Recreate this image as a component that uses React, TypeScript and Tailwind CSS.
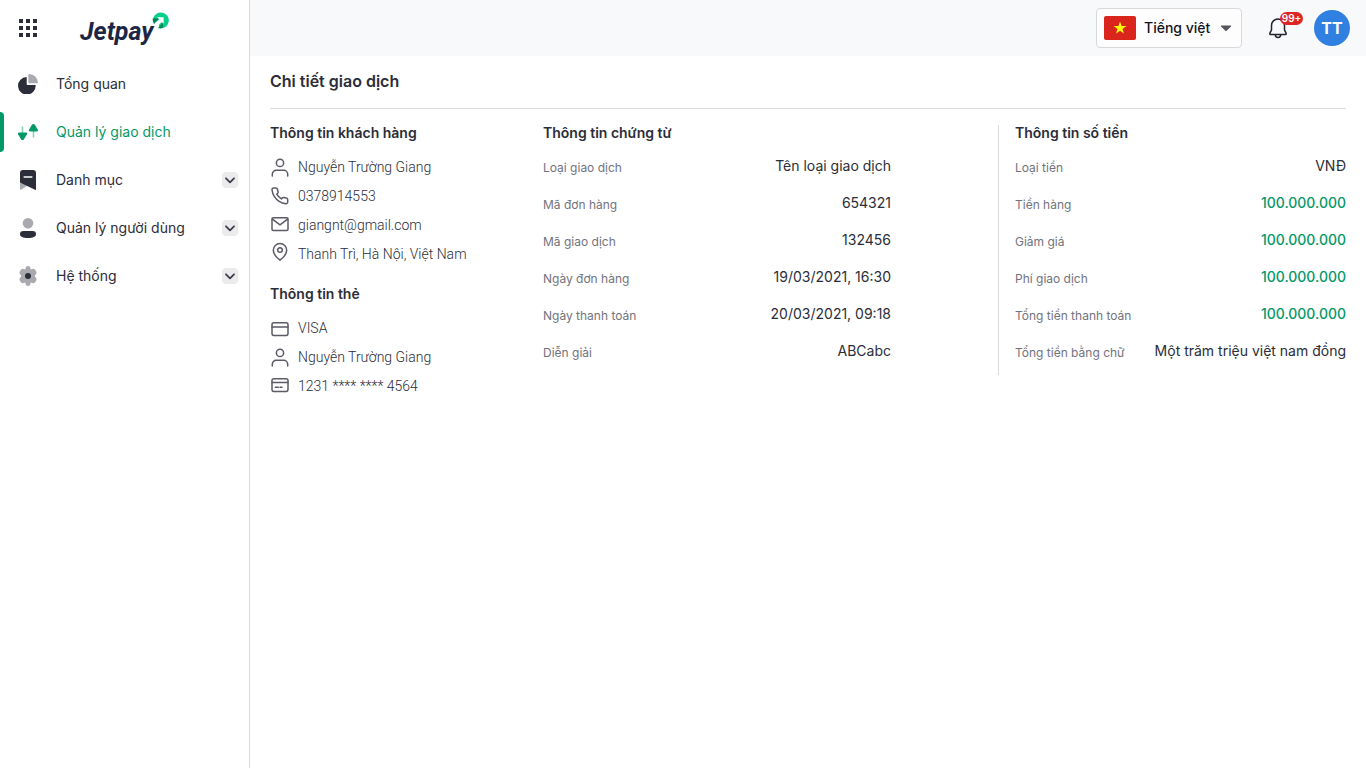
import type { ReactNode } from "react";

type Field = { label: string; value: string; money?: boolean };
type Contact = { icon: ReactNode; text: string };

const documentFields: Field[] = [
  { label: "Loại giao dịch", value: "Tên loại giao dịch" },
  { label: "Mã đơn hàng", value: "654321" },
  { label: "Mã giao dịch", value: "132456" },
  { label: "Ngày đơn hàng", value: "19/03/2021, 16:30" },
  { label: "Ngày thanh toán", value: "20/03/2021, 09:18" },
  { label: "Diễn giải", value: "ABCabc" },
];

const amountFields: Field[] = [
  { label: "Loại tiền", value: "VNĐ" },
  { label: "Tiền hàng", value: "100.000.000", money: true },
  { label: "Giảm giá", value: "100.000.000", money: true },
  { label: "Phí giao dịch", value: "100.000.000", money: true },
  { label: "Tổng tiền thanh toán", value: "100.000.000", money: true },
  { label: "Tổng tiền bằng chữ", value: "Một trăm triệu việt nam đồng" },
];

function LineIcon({ children }: { children: ReactNode }) {
  return (
    <svg
      className="size-5 shrink-0 overflow-visible text-[#5b5b66]"
      viewBox="0 0 20 20"
      fill="none"
      stroke="currentColor"
      strokeWidth="1.5"
      strokeLinecap="round"
      strokeLinejoin="round"
      aria-hidden="true"
    >
      {children}
    </svg>
  );
}

const UserIcon = () => (
  <LineIcon>
    <circle cx="10" cy="5.9" r="3.6" />
    <path d="M2.3 18.900v-1.600a4 4 0 0 1 4-4h7.400a4 4 0 0 1 4 4v1.600" />
  </LineIcon>
);

const PhoneIcon = () => (
  <LineIcon>
    <path d="M17.7 13.8v2.3a1.6 1.6 0 0 1-1.8 1.6 15.6 15.6 0 0 1-6.8-2.4 15.3 15.3 0 0 1-4.7-4.7A15.6 15.6 0 0 1 2 3.7 1.6 1.6 0 0 1 3.600 2h2.300a1.6 1.6 0 0 1 1.600 1.350c.1.760.280 1.500.550 2.200a1.600 1.600 0 0 1-.350 1.650l-1 1a12.500 12.500 0 0 0 4.700 4.700l1-1a1.600 1.600 0 0 1 1.650-.350c.710.260 1.450.450 2.200.550a1.600 1.600 0 0 1 1.450 1.700z" />
  </LineIcon>
);

const MailIcon = () => (
  <LineIcon>
    <rect x="2" y="2.800" width="16" height="12.600" rx="1.200" />
    <path d="m2.400 4.100 7.600 5.700 7.600-5.700" />
  </LineIcon>
);

const PinIcon = () => (
  <LineIcon>
    <path d="M16.700 6.200c0 4.900-6.700 10-6.700 10s-6.700-5.100-6.700-10a6.700 6.700 0 0 1 13.400 0z" />
    <circle cx="10" cy="6" r="2.300" />
  </LineIcon>
);

const CardIcon = () => (
  <LineIcon>
    <rect x="2" y="4.800" width="16" height="12.600" rx="1.800" />
    <path d="M2 9h16" />
  </LineIcon>
);

const CardNumberIcon = () => (
  <LineIcon>
    <rect x="2" y="2.800" width="16" height="12.600" rx="1.800" />
    <path d="M2 6.600h16M5.300 11.300h3M10 11.300h2" />
  </LineIcon>
);

const ChartIcon = () => (
  <svg className="size-5" viewBox="0 0 20 20" aria-hidden="true">
    <path d="M8.700 3v7.200a.8.8 0 0 0 .8.8h8.100a8.800 8.800 0 1 1-8.900-8z" fill="#2b2d38" />
    <path d="M10.400.700c0-.4.300-.7.700-.7a9 9 0 0 1 8.900 8.500c0 .4-.3.700-.7.700h-8.200a.7.7 0 0 1-.7-.7z" fill="#a9aaaf" />
  </svg>
);

const TransferIcon = () => (
  <svg className="size-5" viewBox="0 0 20 20" aria-hidden="true">
    <path d="M4.500 5v6M15.500 9v6" stroke="#8fd2b9" strokeWidth="1.600" strokeLinecap="round" />
    <path d="M1.200 10.500h6.700c1.300 0 1.800 1 1 2.100l-3.100 4.800c-.6.900-2 .9-2.600 0L.2 12.600c-.8-1.100-.3-2.100 1-2.100z" fill="#049868" />
    <path d="M12.200 9.500h6.500c1.300 0 1.800-1 1-2.100l-3-4.800c-.6-.9-2-.9-2.600 0l-3 4.800c-.8 1.100-.2 2.100 1.100 2.100z" fill="#049868" />
  </svg>
);

const BookmarkIcon = () => (
  <svg className="size-5" viewBox="0 0 20 20" aria-hidden="true">
    <path d="M2 11v8.300c0 .6.500.8 1 .5l7-4.500z" fill="#a9aaaf" />
    <path d="M2 3a3 3 0 0 1 3-3h10a3 3 0 0 1 3 3v16.300c0 .6-.4.800-1 .5L2 12.500z" fill="#2b2d38" />
    <path d="M6.200 7h7.600" stroke="white" strokeWidth="1.600" strokeLinecap="round" />
  </svg>
);

const PersonIcon = () => (
  <svg className="size-5" viewBox="0 0 20 20" aria-hidden="true">
    <circle cx="10" cy="5.300" r="5.300" fill="#a9aaaf" />
    <path d="M5.500 13h9a3.500 3.300 0 0 1 3.500 3.300c0 2.500-3 3.700-8 3.700s-8-1.200-8-3.700A3.500 3.300 0 0 1 5.500 13z" fill="#2b2d38" />
  </svg>
);

const GearIcon = () => (
  <svg className="size-5" viewBox="0 0 20 20" aria-hidden="true">
    <path
      d="M7.600 1.900C7.900.7 8.700 0 10 0s2.100.7 2.400 1.900l.3 1.500 1.700-.5c1.100-.3 2.200.1 2.900 1.100l.9 1.500c.6 1.100.4 2.200-.5 3L16.700 10l1 1.500c.9.800 1.100 1.900.5 3l-.9 1.500c-.7 1-1.800 1.400-2.900 1.100l-1.700-.5-.3 1.500c-.3 1.200-1.100 1.900-2.400 1.900s-2.100-.7-2.400-1.900l-.3-1.500-1.700.5c-1.100.3-2.200-.1-2.900-1.100l-.9-1.500c-.6-1.100-.4-2.200.5-3l1-1.500-1-1.500c-.9-.8-1.100-1.900-.5-3L2.700 4c.7-1 1.800-1.400 2.900-1.100l1.700.5z"
      fill="#a9aaaf"
    />
    <circle cx="10" cy="10" r="3" fill="#2b2d38" />
  </svg>
);

const navItems = [
  { label: "Tổng quan", icon: <ChartIcon /> },
  { label: "Quản lý giao dịch", icon: <TransferIcon />, active: true },
  { label: "Danh mục", icon: <BookmarkIcon />, expandable: true },
  { label: "Quản lý người dùng", icon: <PersonIcon />, expandable: true },
  { label: "Hệ thống", icon: <GearIcon />, expandable: true },
];

const customer: Contact[] = [
  { icon: <UserIcon />, text: "Nguyễn Trường Giang" },
  { icon: <PhoneIcon />, text: "0378914553" },
  { icon: <MailIcon />, text: "giangnt@gmail.com" },
  { icon: <PinIcon />, text: "Thanh Trì, Hà Nội, Việt Nam" },
];

const card: Contact[] = [
  { icon: <CardIcon />, text: "VISA" },
  { icon: <UserIcon />, text: "Nguyễn Trường Giang" },
  { icon: <CardNumberIcon />, text: "1231 **** **** 4564" },
];

function Logo() {
  return (
    <a href="#" className="relative block pr-[15px] pt-2 font-[Roboto,sans-serif] text-[25px] leading-8 font-bold italic text-[#1d2745]">
      Jetpay
      <svg className="absolute top-1 right-0 size-[17px]" viewBox="0 0 17 17" aria-hidden="true">
        <path d="M1.200 6A8 8 0 1 1 8 16.400L6.500 12z" fill="#05cf8c" />
        <path d="M.8 6.200h6.400L2.200 12C1 10.500.5 8.500.8 6.200zM11 10.500v4.800c-1.500.9-3.300 1.200-5 .8z" fill="#04885a" />
        <path d="M5 5.300h6.600v6.500L9.500 9.900l-5.300 6.200L1.500 13 7.200 7.300z" fill="white" />
      </svg>
    </a>
  );
}

function Sidebar() {
  return (
    <aside className="w-[250px] shrink-0 border-r border-[#d9d9dc]">
      <div className="flex h-14 items-center gap-[42px] pl-[18px]">
        <button type="button" aria-label="Menu">
          <svg className="size-5" viewBox="0 0 20 20" fill="#2b2d38" aria-hidden="true">
            <path d="M1 1h4v4H1zM8 1h4v4H8zM15 1h4v4h-4zM1 8h4v4H1zM8 8h4v4H8zM15 8h4v4h-4zM1 15h4v4H1zM8 15h4v4H8zM15 15h4v4h-4z" />
          </svg>
        </button>
        <Logo />
      </div>
      <nav className="flex flex-col gap-2 pt-2">
        {navItems.map((item) => (
          <div key={item.label} className="flex h-10 items-center pr-[11px]">
            <span className={item.active ? "h-10 w-1 rounded-r bg-[#049868]" : "h-10 w-1"} />
            <a
              href="#"
              className={
                item.active
                  ? "flex flex-1 items-center gap-[18px] pl-[14px] text-[#049868]"
                  : "flex flex-1 items-center gap-[18px] pl-[14px] text-[#2b2d38]"
              }
            >
              {item.icon}
              {item.label}
            </a>
            {item.expandable && (
              <button
                type="button"
                aria-label={item.label}
                className="flex size-4 items-center justify-center rounded bg-[#ebebed]"
              >
                <svg className="size-4" viewBox="0 0 16 16" fill="none" stroke="#3c3e49" strokeWidth="1.800" strokeLinecap="round" strokeLinejoin="round" aria-hidden="true">
                  <path d="m4 6.300 4 4 4-4" />
                </svg>
              </button>
            )}
          </div>
        ))}
      </nav>
    </aside>
  );
}

function Header() {
  return (
    <header className="flex h-14 items-center justify-end bg-[#f8f9fb] pr-4">
      <label className="flex h-10 w-[146px] items-center gap-1 rounded border border-[#d9d9dc] bg-[#fdfdfd] px-[7px]">
        <svg className="mr-1 h-6 w-8 shrink-0" viewBox="0 0 32 24" aria-hidden="true">
          <rect width="32" height="24" rx="2" fill="#da251d" />
          <path d="m16 5.500 1.500 4.600h4.900l-3.950 2.900 1.500 4.600L16 14.750l-3.950 2.850 1.500-4.600-3.950-2.900h4.900z" fill="#ff0" />
        </svg>
        <select aria-label="Ngôn ngữ" className="min-w-0 flex-1 appearance-none bg-transparent font-medium text-[#14141f]">
          <option>Tiếng việt</option>
        </select>
        <svg className="size-4 shrink-0" viewBox="0 0 16 16" aria-hidden="true">
          <path d="M3.500 5.500h9c.7 0 .9.6.5 1l-4.400 4.300a.8.800 0 0 1-1.200 0L3 6.500c-.4-.4-.2-1 .5-1z" fill="#55565f" />
        </svg>
      </label>
      <button type="button" aria-label="Thông báo" className="relative ml-6">
        <svg className="size-6" viewBox="0 0 24 24" fill="none" stroke="#22232e" strokeWidth="1.500" strokeLinecap="round" strokeLinejoin="round" aria-hidden="true">
          <path d="M12 3a6.500 6.500 0 0 0-6.500 6.500v4.300c0 1.200-1.700 2.400-1.700 4 0 .5.300.8.800.8h14.800c.5 0 .8-.3.800-.8 0-1.600-1.700-2.800-1.700-4V9.500A6.500 6.500 0 0 0 12 3z" />
          <path d="M9.300 18.800a2.700 2.700 0 0 0 5.400 0" />
        </svg>
        <span className="absolute -top-1 left-[14px] flex h-[13px] w-[23px] items-center justify-center rounded-full bg-[#dc2626] text-[10px] font-semibold text-white">
          99+
        </span>
      </button>
      <button type="button" className="ml-6 flex size-9 items-center justify-center rounded-full bg-[#2f80e0] text-base font-bold text-white">
        TT
      </button>
    </header>
  );
}

function SectionTitle({ children }: { children: ReactNode }) {
  return <h2 className="font-semibold leading-4">{children}</h2>;
}

function ContactList({ items }: { items: Contact[] }) {
  return (
    <ul className="mt-[11px] font-[Roboto,sans-serif] font-light">
      {items.map((item) => (
        <li key={item.text} className="flex h-[29px] items-center gap-2">
          {item.icon}
          {item.text}
        </li>
      ))}
    </ul>
  );
}

function FieldList({ fields }: { fields: Field[] }) {
  return (
    <dl className="mt-[6px]">
      {fields.map((field) => (
        <div key={field.label} className="flex h-[37px] items-center justify-between">
          <dt className="pt-1 text-xs text-[#72737c]">{field.label}</dt>
          <dd className={field.money ? "font-medium text-[#049868]" : ""}>{field.value}</dd>
        </div>
      ))}
    </dl>
  );
}

export default function App() {
  return (
    <div className="flex min-h-screen bg-white font-[Inter,sans-serif] text-sm text-[#2b2d38]">
      <Sidebar />
      <div className="min-w-0 flex-1">
        <Header />
        <main className="px-5">
          <h1 className="border-b border-[#d9d9dc] pb-[15px] pt-[13px] text-base font-semibold">Chi tiết giao dịch</h1>
          <div className="-mr-4 mt-4 grid grid-cols-12 items-start">
            <section className="col-span-3">
              <SectionTitle>Thông tin khách hàng</SectionTitle>
              <ContactList items={customer} />
              <div className="pt-[18px]">
                <SectionTitle>Thông tin thẻ</SectionTitle>
                <ContactList items={card} />
              </div>
            </section>
            <section className="col-span-5 grid grid-cols-5">
              <div className="col-span-4 pr-4">
                <SectionTitle>Thông tin chứng từ</SectionTitle>
                <FieldList fields={documentFields} />
              </div>
            </section>
            <section className="col-span-4 border-l border-[#d9d9dc] px-4 pb-[6px]">
              <SectionTitle>Thông tin số tiền</SectionTitle>
              <FieldList fields={amountFields} />
            </section>
          </div>
        </main>
      </div>
    </div>
  );
}
